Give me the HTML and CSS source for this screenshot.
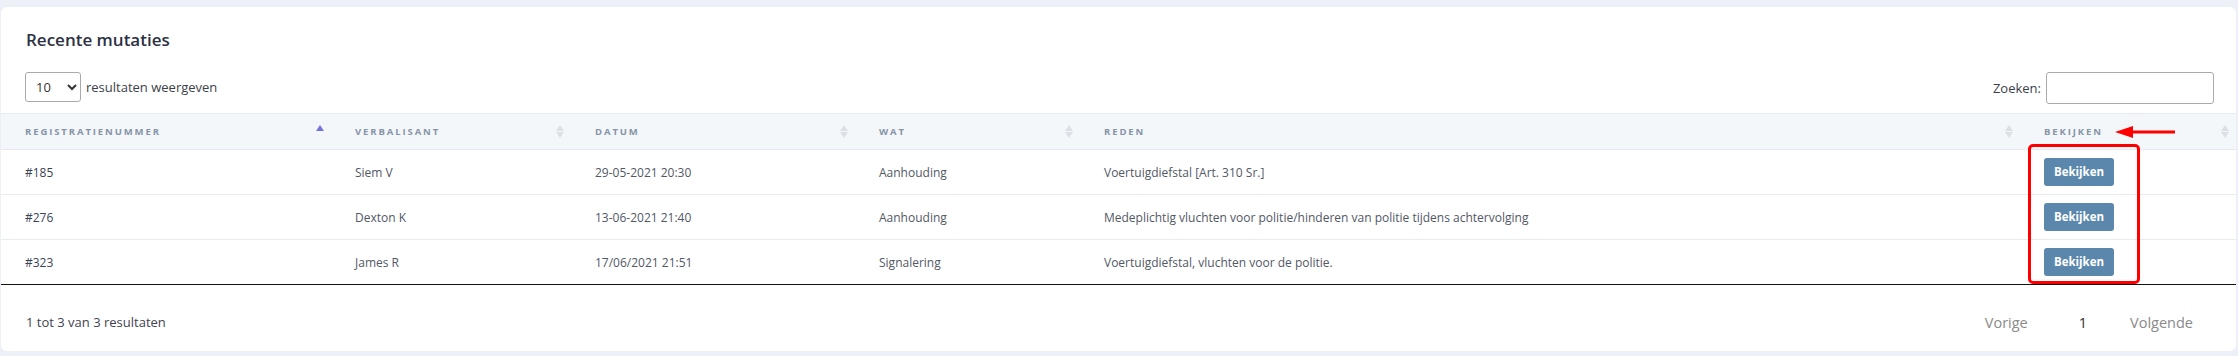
FILE: index.html
```html
<!DOCTYPE html>
<html lang="nl">
<head>
    <meta charset="UTF-8">
    <title>Recente mutaties</title>
    <link rel="stylesheet" href="styles.css">
</head>
<body>
    <div class="card">
        <h2 class="card-title">Recente mutaties</h2>
        <div class="table-controls">
            <label class="length">
                <select>
                    <option>10</option>
                    <option>25</option>
                    <option>50</option>
                </select>
                resultaten weergeven
            </label>
            <label class="search">Zoeken: <input type="search"></label>
        </div>

        <table class="mutaties">
            <colgroup>
                <col style="width: 330px">
                <col style="width: 240px">
                <col style="width: 284px">
                <col style="width: 225px">
                <col style="width: 940px">
                <col>
            </colgroup>
            <thead>
                <tr>
                    <th class="sorted">Registratienummer<span class="sort"></span></th>
                    <th>Verbalisant<span class="sort"></span></th>
                    <th>Datum<span class="sort"></span></th>
                    <th>Wat<span class="sort"></span></th>
                    <th>Reden<span class="sort"></span></th>
                    <th>Bekijken<span class="sort"></span></th>
                </tr>
            </thead>
            <tbody>
                <tr>
                    <td class="nr">#185</td>
                    <td>Siem V</td>
                    <td>29-05-2021 20:30</td>
                    <td>Aanhouding</td>
                    <td>Voertuigdiefstal [Art. 310 Sr.]</td>
                    <td><a href="#" class="btn-view">Bekijken</a></td>
                </tr>
                <tr>
                    <td class="nr">#276</td>
                    <td>Dexton K</td>
                    <td>13-06-2021 21:40</td>
                    <td>Aanhouding</td>
                    <td>Medeplichtig vluchten voor politie/hinderen van politie tijdens achtervolging</td>
                    <td><a href="#" class="btn-view">Bekijken</a></td>
                </tr>
                <tr>
                    <td class="nr">#323</td>
                    <td>James R</td>
                    <td>17/06/2021 21:51</td>
                    <td>Signalering</td>
                    <td>Voertuigdiefstal, vluchten voor de politie.</td>
                    <td><a href="#" class="btn-view">Bekijken</a></td>
                </tr>
            </tbody>
        </table>

        <div class="table-footer">
            <div class="info">1 tot 3 van 3 resultaten</div>
            <div class="paging">
                <a href="#" class="page-link">Vorige</a>
                <a href="#" class="page-link current">1</a>
                <a href="#" class="page-link">Volgende</a>
            </div>
        </div>

        <!-- annotation -->
        <div class="mark-box"></div>
        <svg class="mark-arrow" width="62" height="14" viewBox="0 0 62 14">
            <line x1="14" y1="7" x2="60" y2="7" stroke="#f00" stroke-width="3"></line>
            <polygon points="0,7 18,1 18,13" fill="#f00"></polygon>
        </svg>
    </div>
</body>
</html>
```

FILE: styles.css
```css
* {
    box-sizing: border-box;
}

body {
    margin: 0;
    padding: 7px 2px 4px 1px;
    background: #eef0f7;
    font-family: 'Open Sans', sans-serif;
    color: #525866;
}

.card {
    position: relative;
    background: #fff;
    border-radius: 6px;
    padding-top: 21px;
}

.card-title {
    margin: 0 0 20px 25px;
    font-size: 17px;
    font-weight: 600;
    line-height: 24px;
    color: #2d3143;
}

.table-controls {
    display: flex;
    justify-content: space-between;
    align-items: flex-start;
    padding: 0 22px 0 24px;
    height: 41px;
    font-size: 13px;
    color: #3b3f4a;
}

.length {
    display: flex;
    align-items: center;
    gap: 5px;
    height: 30px;
}

.length select {
    width: 56px;
    height: 30px;
    border: 1px solid #aaa;
    border-radius: 3px;
    padding: 0 6px;
    font-family: inherit;
    font-size: 13px;
    color: #333;
    background: #fff;
}

.search {
    display: flex;
    align-items: center;
    gap: 5px;
}

.search input {
    width: 168px;
    height: 32px;
    border: 1px solid #aaa;
    border-radius: 3px;
}

.mutaties {
    width: 100%;
    border-collapse: collapse;
    table-layout: fixed;
}

.mutaties th {
    position: relative;
    height: 36px;
    padding: 0 24px;
    background: #f4f7fa;
    border-top: 1px solid #e6eaf0;
    border-bottom: 1px solid #e6eaf0;
    text-align: left;
    font-size: 9.5px;
    font-weight: 700;
    letter-spacing: 1.9px;
    text-transform: uppercase;
    color: #8694a8;
}

.sort {
    position: absolute;
    right: 6px;
    top: 11px;
    width: 9px;
    height: 13px;
}

.sort::before,
.sort::after {
    content: "";
    position: absolute;
    left: 0;
    border-left: 4.5px solid transparent;
    border-right: 4.5px solid transparent;
}

.sort::before {
    top: 0;
    border-bottom: 6px solid #dcdfe4;
}

.sort::after {
    bottom: 0;
    border-top: 6px solid #dcdfe4;
}

.sorted .sort::before {
    border-bottom-color: #7474e0;
}

.sorted .sort::after {
    display: none;
}

.mutaties td {
    height: 45px;
    padding: 0 24px;
    border-bottom: 1px solid #e9ecef;
    font-size: 12px;
    color: #525866;
    white-space: nowrap;
}

.mutaties tbody tr:last-child td {
    border-bottom: 1px solid #111;
}

.mutaties td.nr {
    color: #3a4256;
    font-weight: 500;
}

.btn-view {
    display: inline-block;
    width: 70px;
    height: 28px;
    line-height: 28px;
    text-align: center;
    background: #5b87ad;
    color: #fff;
    border-radius: 3px;
    font-size: 11.5px;
    font-weight: 700;
    text-decoration: none;
}

.table-footer {
    display: flex;
    justify-content: space-between;
    align-items: center;
    height: 66px;
    padding: 8px 0 0 25px;
}

.info {
    font-size: 13px;
    color: #3f4350;
}

.paging {
    display: flex;
    padding-right: 43px;
}

.page-link {
    font-size: 14.5px;
    color: #8a8a8a;
    text-decoration: none;
}

.page-link.current {
    color: #333;
    margin: 0 43px 0 51px;
}

.mark-box {
    position: absolute;
    left: 2027px;
    top: 137px;
    width: 112px;
    height: 140px;
    border: 3px solid #f00;
    border-radius: 5px;
}

.mark-arrow {
    position: absolute;
    left: 2114px;
    top: 118px;
}
```
